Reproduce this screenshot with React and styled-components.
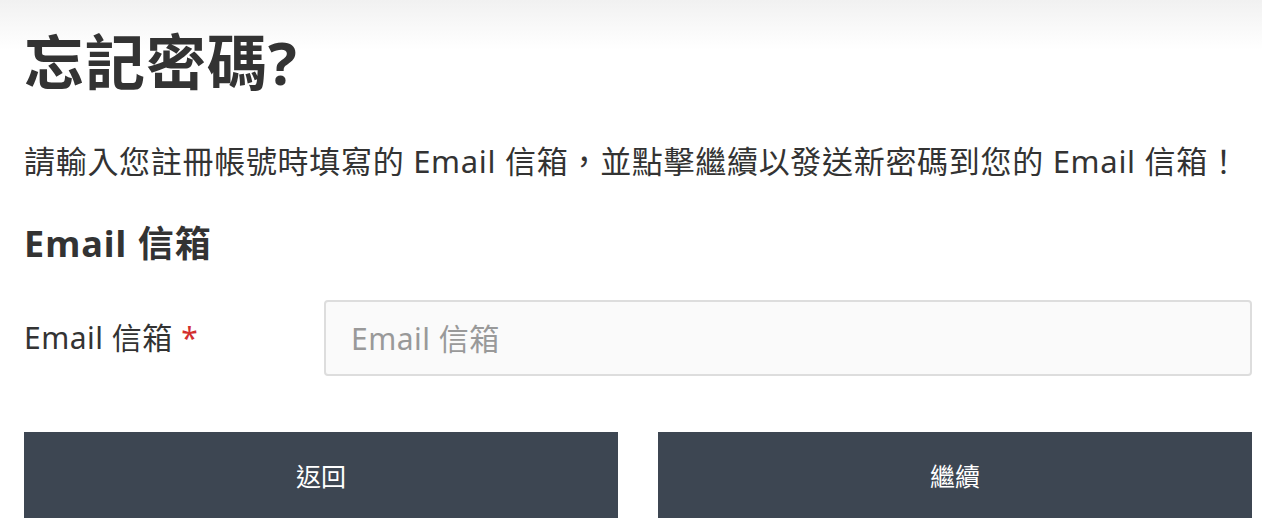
import React, { useState } from 'react'
import styled, { createGlobalStyle } from 'styled-components'

const GlobalStyle = createGlobalStyle`
  html, body {
    margin: 0;
    padding: 0;
    background: #fff;
  }
  body {
    font-family: "Noto Sans", "Noto Sans CJK TC", sans-serif;
    color: #333;
  }
`

function App() {
  const [email, setEmail] = useState('')

  return (
    <Page>
      <GlobalStyle />
      <Title>忘記密碼?</Title>
      <Intro>請輸入您註冊帳號時填寫的 Email 信箱，並點擊繼續以發送新密碼到您的 Email 信箱！</Intro>
      <SectionHeading>Email 信箱</SectionHeading>
      <FieldRow>
        <Label htmlFor="email">
          Email 信箱 <Required>*</Required>
        </Label>
        <Input
          id="email"
          type="email"
          placeholder="Email 信箱"
          value={email}
          onChange={e => setEmail(e.target.value)}
        />
      </FieldRow>
      <ButtonGroup>
        <Button type="button">返回</Button>
        <Button type="button">繼續</Button>
      </ButtonGroup>
    </Page>
  )
}

const Page = styled.div`
  min-height: 530px;
  box-sizing: border-box;
  padding: 26px 10px 0 24px;
  background: linear-gradient(to bottom, #f1f1f1 0px, #fff 50px);
`

const Title = styled.h1`
  margin: 0;
  font-size: 60px;
  line-height: 72px;
  font-weight: 700;
  letter-spacing: 1px;
  color: #333;
`

const Intro = styled.p`
  margin: 41px 0 0;
  font-size: 31px;
  line-height: 45px;
  letter-spacing: 0.7px;
  white-space: nowrap;
  color: #333;
`

const SectionHeading = styled.h2`
  margin: 35px 0 0;
  font-size: 36px;
  line-height: 50px;
  font-weight: 700;
  letter-spacing: 1px;
  color: #333;
`

const FieldRow = styled.div`
  display: grid;
  grid-template-columns: 300px 1fr;
  align-items: center;
  margin-top: 31px;
`

const Label = styled.label`
  font-size: 30px;
  line-height: 40px;
  letter-spacing: 0.5px;
  color: #333;
`

const Required = styled.span`
  color: #d32f2f;
`

const Input = styled.input`
  box-sizing: border-box;
  height: 76px;
  width: 100%;
  padding: 0 25px;
  font-family: inherit;
  font-size: 30px;
  letter-spacing: 0.5px;
  color: #333;
  background: #fafafa;
  border: 2px solid #ddd;
  border-radius: 4px;
  outline: none;

  &::placeholder {
    color: #999;
  }
`

const ButtonGroup = styled.div`
  display: grid;
  grid-template-columns: 1fr 1fr;
  gap: 40px;
  margin-top: 56px;
`

const Button = styled.button`
  height: 86px;
  border: 0;
  border-radius: 0;
  background: #3d4652;
  color: #fff;
  font-family: inherit;
  font-size: 25px;
  cursor: pointer;
`

export default App
